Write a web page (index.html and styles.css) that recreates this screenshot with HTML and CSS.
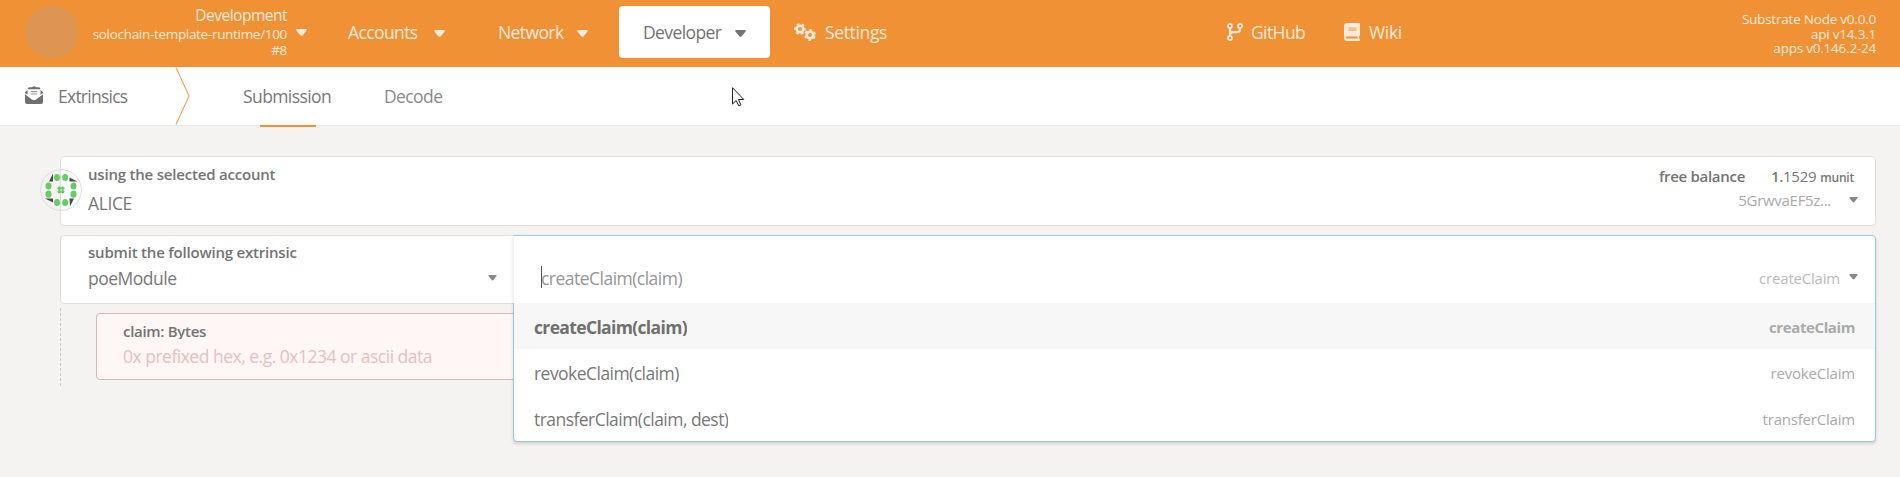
FILE: index.html
```html
<!DOCTYPE html>
<html lang="en">
<head>
<meta charset="utf-8">
<title>Extrinsics</title>
<link rel="stylesheet" href="styles.css">
</head>
<body>
<header class="topbar">
  <div class="chain">
    <div class="chain-logo"></div>
    <div class="chain-info">
      <div class="chain-name">Development</div>
      <div class="chain-runtime">solochain-template-runtime/100</div>
      <div class="chain-block">#8</div>
    </div>
    <svg class="caret" viewBox="0 0 11 7"><path d="M1 0h9q1.300.500.400 1.700L6.500 6.400q-1 .9-2 0L.6 1.700Q-.3.500 1 0z"/></svg>
  </div>
  <nav class="menu">
    <a class="menu-item accounts"><span>Accounts</span><svg class="caret" viewBox="0 0 11 7"><path d="M1 0h9q1.300.500.400 1.700L6.500 6.400q-1 .9-2 0L.6 1.700Q-.3.500 1 0z"/></svg></a>
    <a class="menu-item network"><span>Network</span><svg class="caret" viewBox="0 0 11 7"><path d="M1 0h9q1.300.500.400 1.700L6.500 6.400q-1 .9-2 0L.6 1.700Q-.3.500 1 0z"/></svg></a>
    <a class="menu-item developer"><span>Developer</span><svg class="caret" viewBox="0 0 11 7"><path d="M1 0h9q1.300.500.400 1.700L6.500 6.400q-1 .9-2 0L.6 1.700Q-.3.500 1 0z"/></svg></a>
    <a class="menu-item settings">
      <svg class="gears" viewBox="0 0 22 18"><g fill="none" stroke="currentColor"><circle cx="6" cy="6" r="3.300" stroke-width="2.600"/><circle cx="6" cy="6" r="5" stroke-width="1.800" stroke-dasharray="2.600 2.636" stroke-dashoffset="1.300"/><circle cx="16" cy="12" r="3.300" stroke-width="2.600"/><circle cx="16" cy="12" r="5" stroke-width="1.800" stroke-dasharray="2.600 2.636" stroke-dashoffset="3.900"/></g></svg>
      <span>Settings</span>
    </a>
  </nav>
  <nav class="links">
    <a class="link github">
      <svg viewBox="0 0 16 18"><g fill="none" stroke="currentColor" stroke-width="1.800"><circle cx="3" cy="3" r="2.050"/><circle cx="3" cy="15" r="2.050"/><circle cx="13" cy="3" r="2.050"/><path d="M3 5v8M13 5v1.200q0 3-3 3H6q-3 0-3 3" stroke-width="2.200"/></g></svg>
      <span>GitHub</span>
    </a>
    <a class="link wiki">
      <svg viewBox="0 0 16 18"><path fill="currentColor" fill-rule="evenodd" d="M3 0h12q1 0 1 1v11q0 .8-.8 1v3q.8.200.8 1t-1 1H3q-3 0-3-3V3q0-3 3-3zM3 13.500q-1 0-1 1t1 1h10.500v-2z"/><path fill="#f19135" opacity=".5" d="M4.500 4.300h8v3.700h-8z"/></svg>
      <span>Wiki</span>
    </a>
  </nav>
  <div class="versions">
    <div class="v-node">Substrate Node v0.0.0</div>
    <div class="v-api">api v14.3.1</div>
    <div class="v-apps">apps v0.146.2-24</div>
  </div>
</header>

<div class="tabs">
  <div class="tabs-title">
    <svg class="envelope" viewBox="0 0 18 18"><path fill="currentColor" fill-rule="evenodd" d="M7 1.200Q9-.8 11 1.200h2.500q2 0 2 2v.8L18 6v.9l-2.500 1.800V3.200H2.500v5.500L0 6.900V6l2.500-2v-.8q0-2 2-2z"/><path fill="currentColor" opacity=".7" d="M5.800 5h6.400v1.200H5.800zM5.800 7.400h6.400v1.200H5.800z"/><path fill="currentColor" d="M0 8.300l6.900 5.200q2.100 1.400 4.200 0L18 8.300V16q0 2-2 2H2q-2 0-2-2z"/></svg>
    <span>Extrinsics</span>
  </div>
  <svg class="divider" viewBox="0 0 15 58"><path d="M1 .5L14 29L1 57.500" fill="none" stroke="#f5a65b" stroke-width="1.200"/></svg>
  <a class="tab submission">Submission</a>
  <a class="tab decode">Decode</a>
  <svg class="pointer" viewBox="0 0 13 20"><path d="M.5.700V17l3.700-3.500 2.500 5.300q1.800.3 2.100-1L6.500 12.500h5.300z" fill="#fff" stroke="#221f2b" stroke-width="1"/></svg>
</div>

<main class="content">
  <section class="field account">
    <svg class="identicon" viewBox="0 0 42 42">
      <circle cx="21" cy="21" r="20.400" fill="none" stroke="#dedddd"/>
      <path fill="#4a4a4a" d="M13 4.500V12.500H9zM29.500 8.500l8 4h-8zM5 29.500h8v4zM29.500 29.500h4.500l-4 8z"/>
      <g fill="#64ce64"><ellipse cx="17" cy="8.500" rx="3" ry="3.600"/><ellipse cx="25.200" cy="8.500" rx="3" ry="3.600"/><ellipse cx="17" cy="33.500" rx="3" ry="3.600"/><ellipse cx="25.200" cy="33.500" rx="3" ry="3.600"/><ellipse cx="8.500" cy="17" rx="3" ry="3.600"/><ellipse cx="8.500" cy="25.200" rx="3" ry="3.600"/><ellipse cx="33.500" cy="17" rx="3" ry="3.600"/><ellipse cx="33.500" cy="25.200" rx="3" ry="3.600"/><circle cx="19.300" cy="19.300" r="1.800"/><circle cx="22.700" cy="19.300" r="1.800"/><circle cx="19.300" cy="22.700" r="1.800"/><circle cx="22.700" cy="22.700" r="1.800"/></g>
    </svg>
    <div class="field-main">
      <div class="label">using the selected account</div>
      <div class="value alice">ALICE</div>
    </div>
    <div class="field-side">
      <div class="balance"><span class="label free">free balance</span><span class="amount"><b>1.</b>1529</span><span class="unit">munit</span></div>
      <div class="address-row"><span class="address">5GrwvaEF5z...</span><svg class="caret small" viewBox="0 0 11 7"><path d="M1 0h9q1.300.500.400 1.700L6.500 6.400q-1 .9-2 0L.6 1.700Q-.3.500 1 0z"/></svg></div>
    </div>
  </section>

  <section class="field extrinsic">
    <div class="module">
      <div class="label submit">submit the following extrinsic</div>
      <div class="module-row"><span class="value">poeModule</span><svg class="caret small" viewBox="0 0 11 7"><path d="M1 0h9q1.300.500.400 1.700L6.500 6.400q-1 .9-2 0L.6 1.700Q-.3.500 1 0z"/></svg></div>
    </div>
    <div class="dropdown">
      <div class="search">
        <span class="search-text">createClaim(claim)</span>
        <span class="hint">createClaim</span>
        <svg class="caret small" viewBox="0 0 11 7"><path d="M1 0h9q1.300.500.400 1.700L6.500 6.400q-1 .9-2 0L.6 1.700Q-.3.500 1 0z"/></svg>
      </div>
      <div class="option selected"><span class="option-name">createClaim(claim)</span><span class="hint">createClaim</span></div>
      <div class="option"><span class="option-name">revokeClaim(claim)</span><span class="hint">revokeClaim</span></div>
      <div class="option"><span class="option-name">transferClaim(claim, dest)</span><span class="hint">transferClaim</span></div>
    </div>
  </section>

  <section class="params">
    <div class="param">
      <div class="label bytes">claim: Bytes</div>
      <div class="placeholder">0x prefixed hex, e.g. 0x1234 or ascii data</div>
    </div>
  </section>
</main>
</body>
</html>
```
FILE: styles.css
```css
* { box-sizing: border-box; }
body {
  margin: 0;
  height: 477px;
  overflow: hidden;
  background: #f4f3f1;
  color: #787878;
  font: 17.5px/24px "Open Sans", "Noto Sans", sans-serif;
  letter-spacing: -0.6px;
  white-space: nowrap;
}
svg { display: block; flex: none; }
.caret { width: 11px; height: 7px; fill: currentColor; }
.caret.small { width: 9px; height: 5.500px; color: #888; }

.topbar {
  display: flex;
  height: 67px;
  background: #f19135;
  color: #fdeadb;
}
.chain { display: flex; width: 308px; padding-left: 25px; }
.chain-logo { width: 53px; height: 52px; margin-top: 6px; border-radius: 50%; background: #dc9552; }
.chain-info { width: 209px; padding-top: 6px; text-align: right; }
.chain-name { font-size: 15.500px; line-height: 19px; letter-spacing: -0.5px; }
.chain-runtime { font-size: 13.500px; line-height: 19px; letter-spacing: -0.31px; }
.chain-block { font-size: 13.500px; line-height: 13px; letter-spacing: -0.35px; }
.chain .caret { margin: 29px 0 0 9px; }

.menu { display: flex; padding-top: 6px; width: 919px; }
.menu-item { display: flex; align-items: center; justify-content: space-between; height: 52px; border-radius: 4px; }
.menu-item .caret { margin-top: 3px; }
.accounts { width: 97px; margin-left: 40px; }
.network { width: 90px; margin-left: 53px; }
.developer { width: 151px; margin-left: 31px; padding: 0 24px; background: #fff; color: #737373; }
.menu .settings { width: 94px; margin-left: 24px; justify-content: flex-start; gap: 9px; letter-spacing: -0.35px; }
.gears { width: 22px; height: 18px; }

.links { display: flex; width: 229px; padding-top: 6px; }
.link { display: flex; align-items: center; height: 52px; gap: 8px; }
.link svg { width: 16px; height: 18px; }
.github { width: 117px; }
.wiki { gap: 9px; letter-spacing: -0.3px; }

.versions { width: 420px; padding-top: 12px; text-align: right; font-size: 13.500px; line-height: 14.500px; letter-spacing: -0.22px; }

.tabs { position: relative; display: flex; height: 59px; background: #fff; border-bottom: 1px solid #ebeaea; line-height: 58px; }
.tabs-title { display: flex; align-items: center; gap: 15px; width: 175px; padding-left: 25px; letter-spacing: -0.75px; }
.envelope { width: 18px; height: 18px; margin-top: -2px; color: #707070; }
.divider { width: 15px; height: 58px; }
.tab { position: relative; }
.submission { margin-left: 53px; width: 141px; }
.submission::after { content: ""; position: absolute; left: 17px; top: 58px; width: 56px; height: 2px; background: #f19135; }
.decode { color: #8a8a8a; }
.pointer { position: absolute; left: 732px; top: 20px; width: 13px; height: 20px; }

.content { padding: 30px 24px 0 60px; }
.field { position: relative; background: #fff; border: 1px solid #dededd; border-radius: 4px; }
.label { color: #747474; font-size: 15px; font-weight: 600; letter-spacing: -0.2px; }
.account { display: flex; justify-content: space-between; height: 70px; padding: 0 17px 0 27px; }
.identicon { position: absolute; left: -21px; top: 12px; width: 42px; height: 42px; }
.field-main { padding-top: 5px; }
.alice { padding-top: 5px; letter-spacing: -0.4px; }
.field-side { padding-top: 7px; }
.balance { display: flex; align-items: baseline; justify-content: flex-end; padding-right: 4px; }
.free { letter-spacing: -0.3px; }
.amount { margin-left: 26px; font-size: 15px; letter-spacing: -0.3px; }
.amount b { font-weight: 600; }
.unit { margin-left: 4px; font-size: 12px; font-weight: 600; letter-spacing: -0.2px; }
.address-row { display: flex; justify-content: flex-end; }
.address { margin-right: 18px; color: #aaa; font-size: 15px; line-height: 20px; letter-spacing: -0.3px; }
.address-row .caret { margin-top: 7px; }

.extrinsic { z-index: 2; height: 69px; margin-top: 9px; }
.module { width: 452px; padding: 4px 16px 0 27px; }
.module-row { display: flex; justify-content: space-between; padding-top: 2px; letter-spacing: -0.5px; }
.module-row .caret { margin-top: 9px; }

.dropdown {
  position: absolute;
  left: 452px;
  right: -1px;
  top: -1px;
  height: 207px;
  background: #fff;
  border: 1px solid #96c8da;
  border-radius: 0 4px 4px 4px;
  box-shadow: 0 2px 3px rgba(34, 36, 38, .15);
}
.search { position: relative; display: flex; height: 67px; margin-left: -1px; padding: 30px 17px 0 28px; background: #fff; border-radius: 0 4px 0 0; letter-spacing: -0.52px; }
.search::before { content: ""; position: absolute; left: 0; top: 0; width: 1px; height: 67px; background: #f3f3f3; }
.search-text { position: relative; flex: 1; color: #969696; }
.search-text::before { content: ""; position: absolute; left: 0; top: 0; width: 1px; height: 22px; background: #555; }
.search .hint { margin-right: 9px; color: #bbb; }
.search .caret { margin-top: 8px; }
.hint { color: #aaa; font-size: 15px; letter-spacing: -0.2px; }
.option { display: flex; justify-content: space-between; height: 46px; padding: 16px 20px 0; line-height: 17px; letter-spacing: -0.54px; }
.option-name { height: 17px; overflow: hidden; }
.option.selected { background: #f7f7f7; font-weight: 700; letter-spacing: -0.65px; color: #707070; }
.selected .hint { color: #aaa; letter-spacing: -0.4px; }

.params { margin-top: 4px; height: 78px; padding: 5px 0 0 35px; border-left: 1px dashed #ccc; }
.param { height: 67px; padding: 7px 0 0 26px; border: 1px solid #e0b4b4; border-radius: 4px; background: #fff6f6; }
.bytes { height: 18px; line-height: 20px; overflow: hidden; letter-spacing: -0.3px; }
.placeholder { padding-top: 5px; line-height: 24px; color: #e8c0bf; letter-spacing: -0.5px; }
```
